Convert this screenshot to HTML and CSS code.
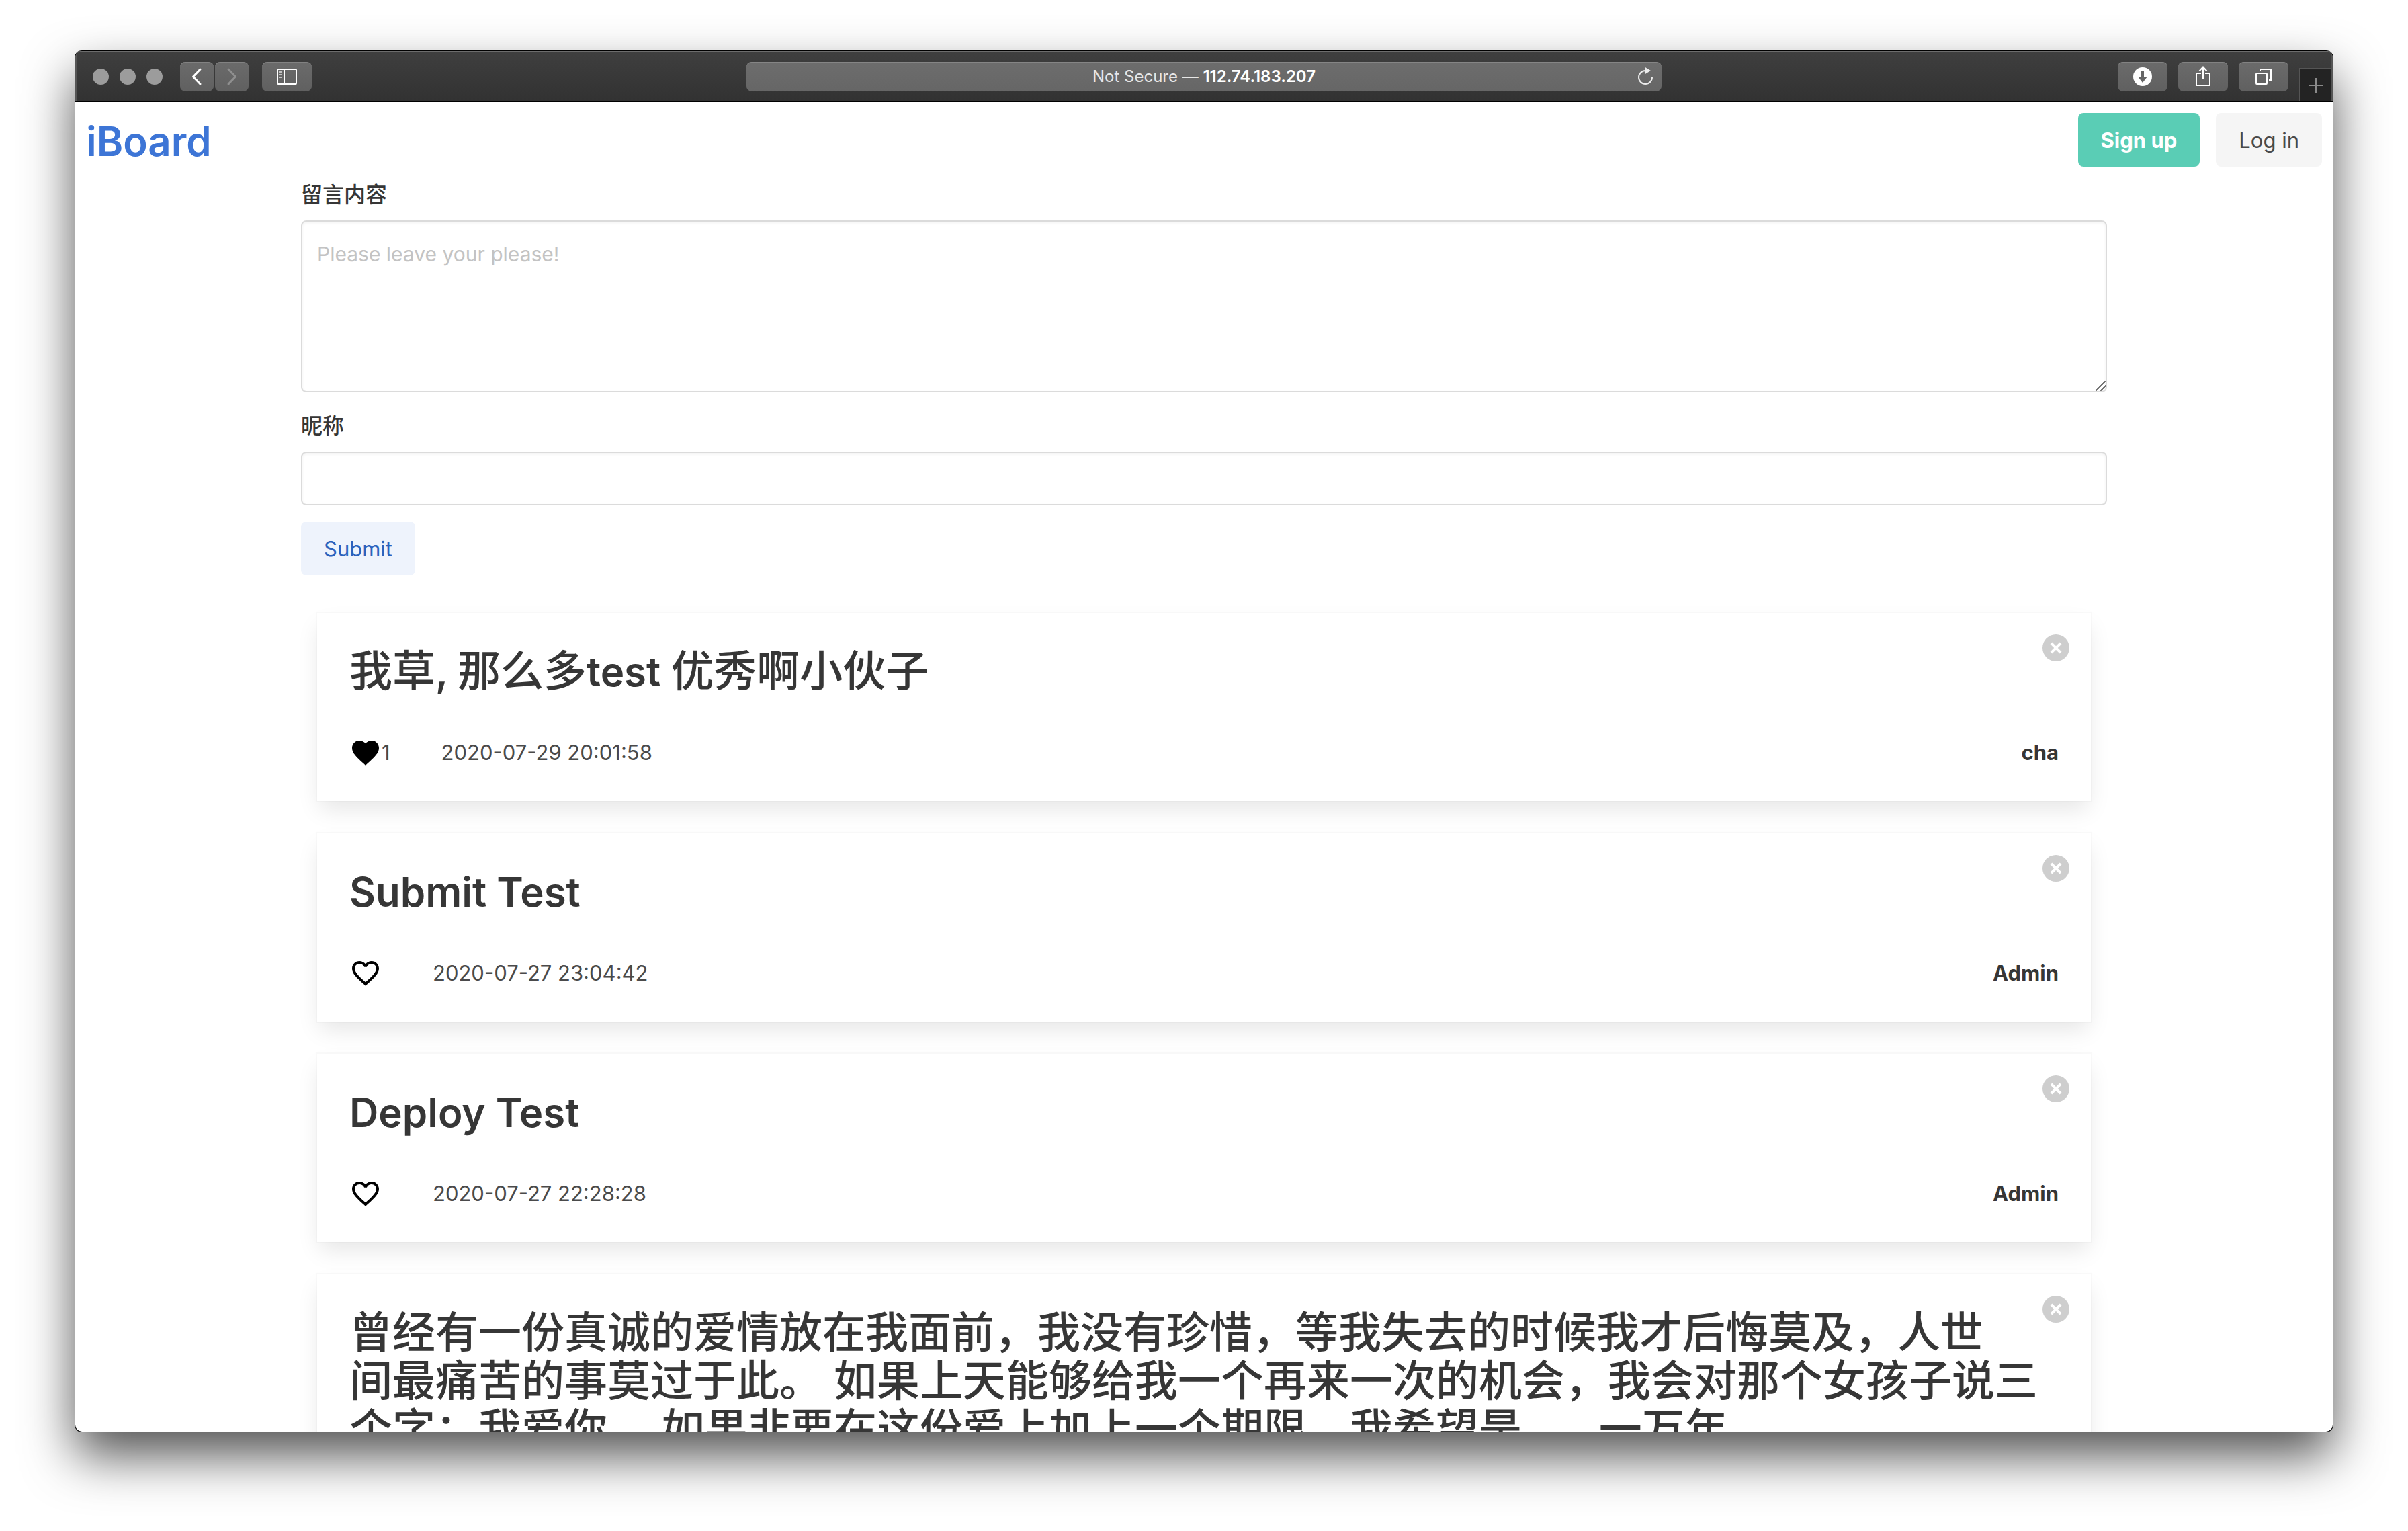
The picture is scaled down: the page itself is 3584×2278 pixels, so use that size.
FILE: index.html
```html
<!DOCTYPE html>
<html lang="zh-CN">
<head>
<meta charset="utf-8">
<title>iBoard</title>
<link rel="stylesheet" href="styles.css">
</head>
<body>
<div class="window">
  <header class="toolbar">
    <div class="toolbar-side">
      <div class="lights"><span class="light"></span><span class="light"></span><span class="light"></span></div>
      <div class="history">
        <button class="tool tool-small" type="button" aria-label="Back"><svg width="50" height="44" viewBox="0 0 50 44" fill="none" stroke="#fff" stroke-width="3" stroke-linecap="round" stroke-linejoin="round"><path d="M30 11 19.500 22 30 33"/></svg></button>
        <button class="tool tool-small" type="button" aria-label="Forward"><svg width="50" height="44" viewBox="0 0 50 44" fill="none" stroke="#8f8f8f" stroke-width="3" stroke-linecap="round" stroke-linejoin="round"><path d="M20 11 30.500 22 20 33"/></svg></button>
      </div>
      <button class="tool" type="button" aria-label="Show sidebar"><svg width="74" height="44" viewBox="0 0 74 44" fill="none" stroke="#fff" stroke-width="2"><rect x="23" y="11" width="28" height="22" rx="1"/><path d="M33 11v22"/><path d="M26 15h4M26 19h4M26 23h4" stroke="#c4c4c4"/></svg></button>
    </div>
    <div class="address">
      <span class="address-text">Not Secure — <b class="address-host">112.74.183.207</b></span>
      <button class="reload" type="button" aria-label="Reload"><svg width="28" height="32" viewBox="0 0 28 32" fill="none" stroke="#ececec" stroke-width="2"><path d="M14 8A10 10 0 1 0 24 18"/><path d="M13 2.500 22 8 13 13.500z" fill="#ececec" stroke="none"/></svg></button>
    </div>
    <div class="toolbar-side toolbar-end">
      <button class="tool" type="button" aria-label="Downloads"><svg width="74" height="44" viewBox="0 0 74 44"><circle cx="37" cy="22" r="14" fill="#fff"/><path d="M35 14h4v8h5l-7 9-7-9h5z" fill="#666"/></svg></button>
      <button class="tool" type="button" aria-label="Share"><svg width="74" height="44" viewBox="0 0 74 44" fill="none" stroke="#fff" stroke-width="2"><path d="M34 17h-7v18h20V17h-7"/><path d="M37 26V8M31.500 13.500 37 7.500l5.500 6"/></svg></button>
      <button class="tool" type="button" aria-label="Show tabs"><svg width="74" height="44" viewBox="0 0 74 44" fill="none" stroke="#fff" stroke-width="2"><rect x="26" y="17" width="16" height="16" rx="1"/><path d="M32 14v-3h16v16h-3"/></svg></button>
      <button class="new-tab" type="button" aria-label="New tab"><svg width="22" height="22" viewBox="0 0 22 22" stroke="#8a8a8a" stroke-width="2"><path d="M11 0v22M0 11h22"/></svg></button>
    </div>
  </header>

  <div class="page">
    <nav class="navbar">
      <a class="brand" href="#">iBoard</a>
      <div class="account">
        <a class="button button-primary" href="#">Sign up</a>
        <a class="button button-light" href="#">Log in</a>
      </div>
    </nav>

    <main class="container">
      <form class="form">
        <div class="field">
          <label class="label" for="message">留言内容</label>
          <textarea class="textarea" id="message" placeholder="Please leave your please!"></textarea>
        </div>
        <div class="field">
          <label class="label" for="nickname">昵称</label>
          <input class="input" id="nickname" type="text">
        </div>
        <button class="button button-link" type="submit">Submit</button>
      </form>

      <section class="messages">
        <article class="card">
          <button class="delete" type="button" aria-label="Delete"></button>
          <h2 class="title">我草<span class="latin">, </span>那么多<span class="latin">test </span>优秀啊小伙子</h2>
          <div class="meta">
            <button class="like" type="button" aria-label="Unlike"><svg width="48" height="48" viewBox="0 0 24 24"><path d="M12 21.350l-1.450-1.320C5.400 15.360 2 12.280 2 8.500 2 5.420 4.420 3 7.500 3c1.740 0 3.410.81 4.500 2.090C13.090 3.810 14.760 3 16.500 3 19.580 3 22 5.420 22 8.500c0 3.780-3.400 6.860-8.550 11.540L12 21.350z"/></svg>1</button>
            <time class="date">2020-07-29 20:01:58</time>
            <strong class="author">cha</strong>
          </div>
        </article>
        <article class="card">
          <button class="delete" type="button" aria-label="Delete"></button>
          <h2 class="title"><span class="latin">Submit Test</span></h2>
          <div class="meta">
            <button class="like" type="button" aria-label="Like"><svg width="48" height="48" viewBox="0 0 24 24"><path d="M16.500 3c-1.740 0-3.410.81-4.500 2.090C10.910 3.810 9.240 3 7.500 3 4.420 3 2 5.420 2 8.500c0 3.780 3.400 6.860 8.550 11.540L12 21.350l1.450-1.320C18.600 15.360 22 12.280 22 8.500 22 5.420 19.580 3 16.500 3zm-4.400 15.550l-.1.1-.1-.1C7.140 14.240 4 11.390 4 8.500 4 6.500 5.500 5 7.500 5c1.540 0 3.040.99 3.570 2.360h1.870C13.460 5.990 14.960 5 16.500 5c2 0 3.500 1.500 3.500 3.500 0 2.890-3.140 5.740-7.900 10.050z"/></svg></button>
            <time class="date">2020-07-27 23:04:42</time>
            <strong class="author">Admin</strong>
          </div>
        </article>
        <article class="card">
          <button class="delete" type="button" aria-label="Delete"></button>
          <h2 class="title"><span class="latin">Deploy Test</span></h2>
          <div class="meta">
            <button class="like" type="button" aria-label="Like"><svg width="48" height="48" viewBox="0 0 24 24"><path d="M16.500 3c-1.740 0-3.410.81-4.500 2.090C10.910 3.810 9.240 3 7.500 3 4.420 3 2 5.420 2 8.500c0 3.780 3.400 6.860 8.550 11.540L12 21.350l1.450-1.320C18.600 15.360 22 12.280 22 8.500 22 5.420 19.580 3 16.500 3zm-4.400 15.550l-.1.1-.1-.1C7.140 14.240 4 11.390 4 8.500 4 6.500 5.500 5 7.500 5c1.540 0 3.040.99 3.570 2.360h1.870C13.460 5.990 14.960 5 16.500 5c2 0 3.500 1.500 3.500 3.500 0 2.890-3.140 5.740-7.900 10.050z"/></svg></button>
            <time class="date">2020-07-27 22:28:28</time>
            <strong class="author">Admin</strong>
          </div>
        </article>
        <article class="card">
          <button class="delete" type="button" aria-label="Delete"></button>
          <h2 class="title">曾经有一份真诚的爱情放在我面前，我没有珍惜，等我失去的时候我才后悔莫及，人世<br>间最痛苦的事莫过于此。 如果上天能够给我一个再来一次的机会，我会对那个女孩子说三<br>个字：我爱你。 如果非要在这份爱上加上一个期限，我希望是<span class="latin">......</span>一万年</h2>
        </article>
      </section>
    </main>
  </div>
</div>
</body>
</html>
```
FILE: styles.css
```css
*, *::before, *::after { box-sizing: border-box; }

body {
  margin: 0;
  height: 100vh;
  padding: 76px 112px 148px;
  background: #fff;
  color: #4a4a4a;
  font: 31px/48px Inter, "Noto Sans CJK SC", sans-serif;
  overflow: hidden;
}

button, input, textarea { font: inherit; color: inherit; }
button { border: 0; padding: 0; background: none; }
svg { display: block; }

.window {
  height: 100%;
  display: flex;
  flex-direction: column;
  overflow: hidden;
  background: #fff;
  border-radius: 10px;
  box-shadow: 0 0 0 1px #000, 0 36px 76px rgba(0, 0, 0, .68);
}

/* Browser toolbar */
.toolbar {
  flex: none;
  height: 76px;
  display: grid;
  grid-template-columns: 1fr 1362px 1fr;
  align-items: center;
  background: linear-gradient(#3f3f3f, #323232);
  border-bottom: 1px solid #000;
  box-shadow: inset 0 2px 0 #6c6c6c, inset 2px 0 0 #555, inset -2px 0 0 #555;
}
.toolbar-side { display: flex; align-items: center; gap: 20px; padding-left: 26px; }
.toolbar-end { justify-content: flex-end; gap: 16px; padding: 0; height: 100%; }
.lights { display: flex; gap: 16px; margin-right: 6px; }
.light { width: 24px; height: 24px; border-radius: 50%; background: #9c9c9c; }
.history { display: flex; gap: 2px; }
.tool {
  width: 74px;
  height: 44px;
  border-radius: 8px;
  background: linear-gradient(#6b6b6b, #606060);
  box-shadow: inset 0 1px 0 #828282;
}
.tool-small { width: 50px; }
.address {
  position: relative;
  height: 44px;
  display: flex;
  align-items: center;
  justify-content: center;
  border-radius: 8px;
  background: linear-gradient(#6d6d6d, #666);
  box-shadow: inset 0 1px 0 #858585;
  color: #e6e6e6;
  font-size: 24px;
}
.address-host { color: #fff; font-weight: 600; }
.reload { position: absolute; right: 10px; top: 5px; }
.new-tab {
  width: 50px;
  height: 50px;
  align-self: flex-end;
  display: grid;
  place-items: center;
  background: #232323;
  border: solid #555;
  border-width: 2px 2px 0;
}

/* Page */
.page { flex: 1; min-height: 0; overflow: hidden; }
.navbar {
  height: 112px;
  padding: 0 16px;
  display: flex;
  align-items: center;
  justify-content: space-between;
}
.brand {
  padding-top: 4px;
  color: #3d75d6;
  font-size: 60px;
  line-height: 72px;
  font-weight: 600;
  text-decoration: none;
}
.account { display: flex; gap: 24px; }
.button {
  height: 80px;
  padding: 2px 34px 0;
  display: inline-flex;
  align-items: center;
  border-radius: 8px;
  text-decoration: none;
}
.button-primary { background: #5acdb5; color: #fff; font-weight: 700; }
.button-light { background: #f5f5f5; color: #4a4a4a; }
.button-link { background: #eef3fc; color: #2a62bd; }

.container { width: 80%; margin: 0 auto; }
.field { margin-bottom: 24px; }
.label {
  display: block;
  padding-top: 2px;
  margin-bottom: 14px;
  color: #363636;
  font-size: 32px;
  font-weight: 500;
}
.input, .textarea {
  display: block;
  width: 100%;
  border: 2px solid #dbdbdb;
  border-radius: 8px;
  background: #fff;
  box-shadow: inset 0 2px 4px rgba(10, 10, 10, .05);
  padding: 24px 22px 20px;
  outline: 0;
}
.input { height: 80px; }
.textarea { height: 256px; resize: vertical; font-size: 30px; }
.textarea::placeholder { color: #c3c3c3; }
.textarea::-webkit-resizer {
  background: linear-gradient(135deg, transparent 46%, #777 46% 54%, transparent 54% 70%, #777 70% 78%, transparent 78%);
}

.messages { padding: 56px 24px 0; display: flex; flex-direction: column; gap: 48px; }
.card {
  position: relative;
  padding: 48px;
  background: #fff;
  box-shadow: 0 16px 32px -4px rgba(10, 10, 10, .1), 0 0 0 2px rgba(10, 10, 10, .02);
}
.title {
  margin: 0 0 62px;
  padding-top: 2px;
  color: #363636;
  font-size: 64px;
  line-height: 72px;
  font-weight: 500;
}
.latin { font-size: 60px; line-height: 1; font-weight: 600; }
.meta { display: flex; align-items: center; gap: 76px; }
.like { display: flex; align-items: center; }
.author { margin-left: auto; color: #363636; font-weight: 700; }
.delete {
  position: absolute;
  top: 32px;
  right: 32px;
  width: 40px;
  height: 40px;
  border-radius: 50%;
  background: #cecece;
}
.delete::before, .delete::after {
  content: "";
  position: absolute;
  top: 18px;
  left: 10px;
  width: 20px;
  height: 4px;
  background: #fff;
  transform: rotate(45deg);
}
.delete::after { transform: rotate(-45deg); }
```
